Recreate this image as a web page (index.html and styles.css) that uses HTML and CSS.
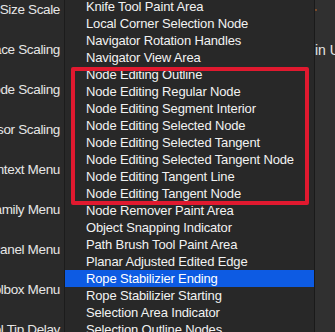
FILE: index.html
```html
<!DOCTYPE html>
<html lang="en">
<head>
  <meta charset="UTF-8">
  <title>Preferences</title>
  <link rel="stylesheet" href="styles.css">
</head>
<body>
  <!-- left labels of the preference pane -->
  <div class="labels">
    <div class="label">Font Size Scale</div>
    <div class="label">Interface Scaling</div>
    <div class="label">Node Scaling</div>
    <div class="label">Cursor Scaling</div>
    <div class="label">Show Context Menu</div>
    <div class="label">Font Family Menu</div>
    <div class="label">Show Panel Menu</div>
    <div class="label">Toolbox Menu</div>
    <div class="label">Tool Tip Delay</div>
  </div>

  <!-- popup menu -->
  <div class="menu">
    <div class="item">Knife Tool Paint Area</div>
    <div class="item">Local Corner Selection Node</div>
    <div class="item">Navigator Rotation Handles</div>
    <div class="item">Navigator View Area</div>
    <div class="item">Node Editing Outline</div>
    <div class="item">Node Editing Regular Node</div>
    <div class="item">Node Editing Segment Interior</div>
    <div class="item">Node Editing Selected Node</div>
    <div class="item">Node Editing Selected Tangent</div>
    <div class="item">Node Editing Selected Tangent Node</div>
    <div class="item">Node Editing Tangent Line</div>
    <div class="item">Node Editing Tangent Node</div>
    <div class="item">Node Remover Paint Area</div>
    <div class="item">Object Snapping Indicator</div>
    <div class="item">Path Brush Tool Paint Area</div>
    <div class="item">Planar Adjusted Edited Edge</div>
    <div class="item selected">Rope Stabilizier Ending</div>
    <div class="item">Rope Stabilizier Starting</div>
    <div class="item">Selection Area Indicator</div>
    <div class="item">Selection Outline Nodes</div>

    <!-- red annotation box -->
    <div class="mark"></div>
  </div>

  <!-- right side of the pane -->
  <div class="right">
    <div class="dot"></div>
    <div class="right-label">in UI</div>
  </div>
</body>
</html>
```
FILE: styles.css
```css
body {
  margin: 0;
  width: 335px;
  height: 332px;
  overflow: hidden;
  display: flex;
  background-color: #2a2a2a;
  font-family: "Liberation Sans", Arial, sans-serif;
  color: #e6e6e6;
}

/* left labels */
.labels {
  width: 64px;
  flex-shrink: 0;
  display: flex;
  flex-direction: column;
  align-items: flex-end;
  padding-top: 1px;
  overflow: hidden;
}

.label {
  height: 40px;
  flex-shrink: 0;
  line-height: 18px;
  padding-right: 4px;
  font-size: 13.5px;
  letter-spacing: -0.35px;
  white-space: nowrap;
}

/* popup menu */
.menu {
  width: 249px;
  flex-shrink: 0;
  position: relative;
  background-color: #282828;
  border-left: 1px solid #1c1c1c;
  border-right: 1px solid #1a1a1a;
  margin-top: -2px;
}

.item {
  height: 17px;
  line-height: 17px;
  padding-left: 21px;
  font-size: 13px;
  letter-spacing: -0.15px;
  color: #f2f2f2;
  white-space: nowrap;
}

.item.selected {
  background-color: #0d5be3;
  color: #ffffff;
}

.mark {
  position: absolute;
  left: 6px;
  top: 69px;
  width: 230px;
  height: 130px;
  border: 4px solid #e0192f;
  border-radius: 2px;
}

/* right side */
.right {
  flex: 1;
  background-color: #303030;
  position: relative;
  overflow: hidden;
}

.dot {
  position: absolute;
  left: 0;
  top: 9px;
  width: 2px;
  height: 2px;
  background-color: #7a4a2a;
}

.right-label {
  padding-top: 41px;
  font-size: 14px;
  line-height: 18px;
  white-space: nowrap;
}
```
